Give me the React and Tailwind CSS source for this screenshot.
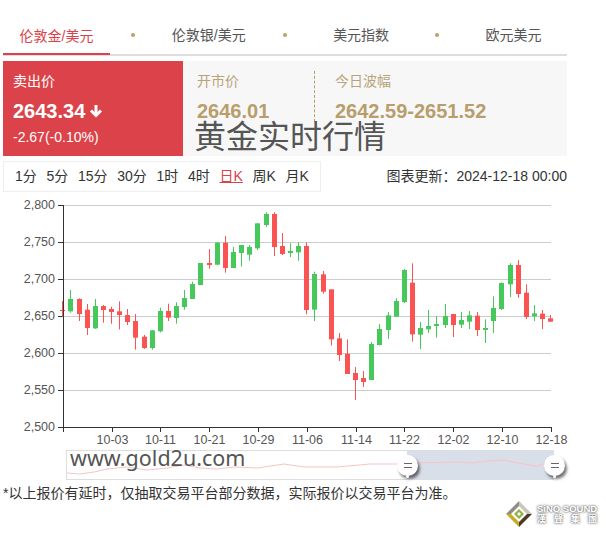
// x is the screen column, the rest are chart y values at 3x: [x, kind, high, low, bodyTop, bodyBottom]
const candles = [
  [62, 'r', 318, 365, 345, 348], [70, 'g', 285, 353, 312, 349], [79, 'r', 310, 378, 312, 357],
  [87, 'r', 327, 420, 344, 399], [95, 'g', 312, 402, 333, 400], [103, 'r', 330, 383, 333, 345],
  [111, 'r', 335, 386, 342, 351], [119, 'r', 319, 403, 349, 360], [127, 'r', 342, 390, 360, 381],
  [135, 'r', 357, 464, 378, 428], [144, 'r', 420, 462, 425, 459], [152, 'g', 405, 464, 406, 459],
  [160, 'g', 338, 412, 348, 409], [168, 'r', 326, 378, 348, 368], [176, 'g', 322, 386, 333, 369],
  [184, 'g', 285, 344, 309, 336], [192, 'g', 260, 312, 267, 312], [200, 'g', 204, 270, 204, 270],
  [209, 'r', 162, 221, 204, 210], [217, 'g', 142, 210, 143, 209], [225, 'r', 123, 233, 143, 219],
  [233, 'g', 156, 219, 171, 219], [241, 'g', 150, 215, 150, 174], [249, 'g', 150, 197, 156, 179],
  [257, 'g', 85, 165, 85, 160], [266, 'g', 52, 96, 57, 90], [274, 'r', 52, 183, 57, 156],
  [282, 'r', 114, 180, 153, 177], [290, 'g', 145, 186, 168, 174], [298, 'g', 141, 197, 153, 172],
  [306, 'r', 142, 358, 153, 345], [314, 'g', 230, 378, 237, 344], [323, 'r', 228, 296, 238, 290],
  [331, 'r', 283, 451, 283, 433], [339, 'r', 414, 498, 430, 480], [347, 'r', 433, 537, 476, 537],
  [355, 'r', 516, 615, 534, 555], [363, 'r', 528, 576, 549, 561], [371, 'g', 441, 555, 447, 555],
  [379, 'g', 387, 451, 402, 450], [388, 'g', 351, 432, 361, 405], [396, 'g', 310, 365, 318, 365],
  [404, 'g', 222, 324, 225, 321], [412, 'r', 205, 440, 263, 418], [420, 'g', 381, 462, 399, 419],
  [428, 'g', 345, 414, 393, 403], [436, 'g', 363, 428, 387, 393], [445, 'g', 327, 399, 363, 390],
  [453, 'r', 357, 426, 357, 390], [461, 'g', 351, 399, 375, 389], [469, 'g', 348, 402, 361, 380],
  [477, 'r', 351, 423, 362, 405], [485, 'g', 373, 444, 399, 405], [493, 'g', 304, 414, 339, 378],
  [501, 'g', 262, 345, 264, 342], [510, 'g', 205, 306, 210, 268], [518, 'r', 195, 308, 210, 297],
  [526, 'r', 268, 372, 293, 366], [534, 'g', 330, 378, 355, 364], [542, 'r', 345, 402, 356, 372],
  [550, 'r', 360, 381, 370, 380],
]

const yTicks = [
  ['2,800', 10.5], ['2,750', 47.5], ['2,700', 84.5], ['2,650', 121.5],
  ['2,600', 158.5], ['2,550', 195.5], ['2,500', 232.5],
]

const xTicks = [
  ['10-03', 112.5], ['10-11', 160.5], ['10-21', 209.5], ['10-29', 258.5], ['11-06', 307.5],
  ['11-14', 356.5], ['11-22', 404.5], ['12-02', 453.5], ['12-10', 502.5], ['12-18', 551.5],
]

const ranges = ['1分', '5分', '15分', '30分', '1时', '4时', '日K', '周K', '月K']

function Tab({ label, active }) {
  return (
    <div className={`w-[107px] h-[34px] flex items-center justify-center text-sm ${active ? 'text-[#dc4249] border-b-[2px] border-[#dc4249] -mb-[2px] pb-[2px]' : 'text-[#555] pb-[4px]'}`}>
      {label}
    </div>
  )
}

function Dot() {
  return <div className="w-[4px] h-[4px] mb-[4px] rounded-full bg-[#b8a070]" />
}

function KChart() {
  return (
    <svg width="606" height="253" className="block">
      {yTicks.map(([label, y]) => (
        <g key={label}>
          {y < 232 && <line x1="63" x2="551" y1={y} y2={y} stroke="#ccc" />}
          <line x1="58" x2="63" y1={y} y2={y} stroke="#333" />
          <text x="55" y={y + 3} textAnchor="end" fontSize="12.5" fill="#555">{label}</text>
        </g>
      ))}
      {candles.map(([x, kind, high, low, top, bottom]) => {
        const color = kind === 'r' ? '#fb5252' : '#47c85a'
        return (
          <g key={x}>
            <rect x={x} y={high / 3} width="1" height={(low - high) / 3} fill={color} />
            <rect x={x - 2} y={top / 3} width="5" height={Math.max((bottom - top) / 3, 1)} fill={color} />
          </g>
        )
      })}
      <line x1="63.5" x2="63.5" y1="10" y2="237" stroke="#333" />
      <line x1="63" x2="552" y1="232.5" y2="232.5" stroke="#333" />
      <line x1="63.5" x2="63.5" y1="232" y2="237" stroke="#333" />
      {xTicks.map(([label, x]) => (
        <g key={label}>
          <line x1={x} x2={x} y1="232" y2="237" stroke="#333" />
          <text x={x} y="248.5" textAnchor="middle" fontSize="12.5" fill="#555">{label}</text>
        </g>
      ))}
    </svg>
  )
}

function Handle({ className }) {
  return (
    <div className={`absolute top-[4px] w-[21px] h-[21px] rounded-full bg-white shadow-[2px_3px_3px_rgba(0,0,0,0.55)] flex flex-col items-center justify-center gap-[3px] ${className}`}>
      <div className="w-[8px] h-[1px] bg-[#666]" />
      <div className="w-[8px] h-[1px] bg-[#666]" />
      <div className="absolute -bottom-[2px] w-[3px] h-[3px] rounded-full bg-white" />
    </div>
  )
}

function Slider() {
  return (
    <div className="relative ml-[66px] w-[488px] h-[30px] border border-r-0 border-[#ddd]">
      <div className="absolute left-[340px] right-0 -top-px -bottom-px bg-[#d9dfe9]" />
      <svg width="488" height="28" className="absolute left-0 top-0">
        <polyline
          fill="none"
          stroke="#f7c4c4"
          points="0,12 13,13 27,11 40,8 60,6 80,9 100,7 117,4 133,7 150,8 167,6 190,7 217,3 237,6 270,6 303,3 340,3 350,2 390,1 405,2 420,0 437,-1 450,2 470,5 482,1 490,2"
          transform="translate(0,10)"
        />
      </svg>
      <Handle className="left-[330px]" />
      <Handle className="left-[477px]" />
      <span className="absolute left-[3px] -top-[2px] text-[21.5px] leading-[18px] text-[#555] font-[family-name:'Noto_Sans',sans-serif]">www.gold2u.com</span>
    </div>
  )
}

function Logo() {
  return (
    <div className="flex items-center justify-end gap-[5px] pr-[9px] -mt-[2px]">
      <svg width="26" height="26" viewBox="0 0 26 26">
        <polygon points="13,0 26,13 13,13" fill="#c9c5b8" />
        <polygon points="13,0 0,13 13,13" fill="#8f8d86" />
        <polygon points="0,13 13,26 13,13" fill="#c8aa24" />
        <polygon points="26,13 13,26 13,13" fill="#4f3a22" />
        <polygon points="13,5 21,13 13,21 5,13" fill="#fff" />
        <polygon points="13,8 18,13 13,18 8,13" fill="#8fb33e" />
        <polygon points="13,11 15,13 13,15 11,13" fill="#fff" />
      </svg>
      <div className="w-[60px] text-white [text-shadow:0_0_2px_#555,0_0_3px_#888] font-bold">
        <div className="text-[9.5px] leading-[10px] whitespace-nowrap">SiNO SOUND</div>
        <div className="flex justify-between text-[9px] leading-[11px]">
          <span>漢</span><span>聲</span><span>集</span><span>團</span>
        </div>
      </div>
    </div>
  )
}

export default function App() {
  return (
    <div className="w-[606px] h-[535px] bg-white overflow-hidden font-[family-name:'Liberation_Sans','Noto_Sans_CJK_SC',sans-serif]">
      <div className="w-[570px] px-[3px] pt-[20px]">
        {/* 品种切换 */}
        <div className="flex items-center justify-between border-b-[2px] border-[#ddd] h-[36px]">
          <Tab label="伦敦金/美元" active />
          <Dot />
          <Tab label="伦敦银/美元" />
          <Dot />
          <Tab label="美元指数" />
          <Dot />
          <Tab label="欧元美元" />
        </div>

        {/* 报价 */}
        <div className="relative mt-[5px] h-[95px] flex bg-[#f7f7f7]">
          <div className="w-[180px] bg-[#dc4249] text-white pl-[10px] pt-[10px]">
            <div className="text-sm leading-[20px]">卖出价</div>
            <div className="flex items-center gap-[4px] mt-[9px] text-[20px] leading-[22px] font-bold">
              2643.34
              <svg width="14" height="14" viewBox="0 0 14 14" fill="none" stroke="white" strokeWidth="3">
                <path d="M7 1v10" />
                <path d="M2 6.5l5 5 5-5" />
              </svg>
            </div>
            <div className="text-sm leading-[20px] mt-[5px]">-2.67(-0.10%)</div>
          </div>
          <div className="w-[131px] pl-[14px] pt-[10px]">
            <div className="text-sm leading-[20px] text-[#b9a47a]">开市价</div>
            <div className="text-[20px] leading-[22px] font-bold text-[#b79e6c] mt-[9px]">2646.01</div>
          </div>
          <div className="mt-[10px] h-[51px] border-l border-dashed border-[#b79e6c] pl-[20px]">
            <div className="text-sm leading-[20px] text-[#b9a47a]">今日波幅</div>
            <div className="text-[20px] leading-[22px] font-bold text-[#b79e6c] mt-[9px] whitespace-nowrap">2642.59-2651.52</div>
          </div>
          <div className="absolute left-[191px] top-[58px] text-[32px] leading-[36px] text-[#555] whitespace-nowrap">黄金实时行情</div>
        </div>

        {/* 周期 */}
        <div className="flex items-center justify-between mt-[5px]">
          <div className="w-[318px] h-[31px] border border-[#eee] flex items-center gap-[9.7px] pl-[11px] pb-[2px] text-sm text-[#333]">
            {ranges.map((r) => (
              <span key={r} className={r === '日K' ? 'text-[#dc4249] underline' : ''}>{r}</span>
            ))}
          </div>
          <div className="text-sm text-[#333] pb-[2px]">图表更新：2024-12-18 00:00</div>
        </div>
      </div>

      <div className="mt-[3px]">
        <KChart />
      </div>
      <div className="mt-[2px]">
        <Slider />
      </div>
      <div className="px-[3px] mt-[3px] text-sm leading-[20px] text-[#333]">*以上报价有延时，仅抽取交易平台部分数据，实际报价以交易平台为准。</div>
      <Logo />
    </div>
  )
}
